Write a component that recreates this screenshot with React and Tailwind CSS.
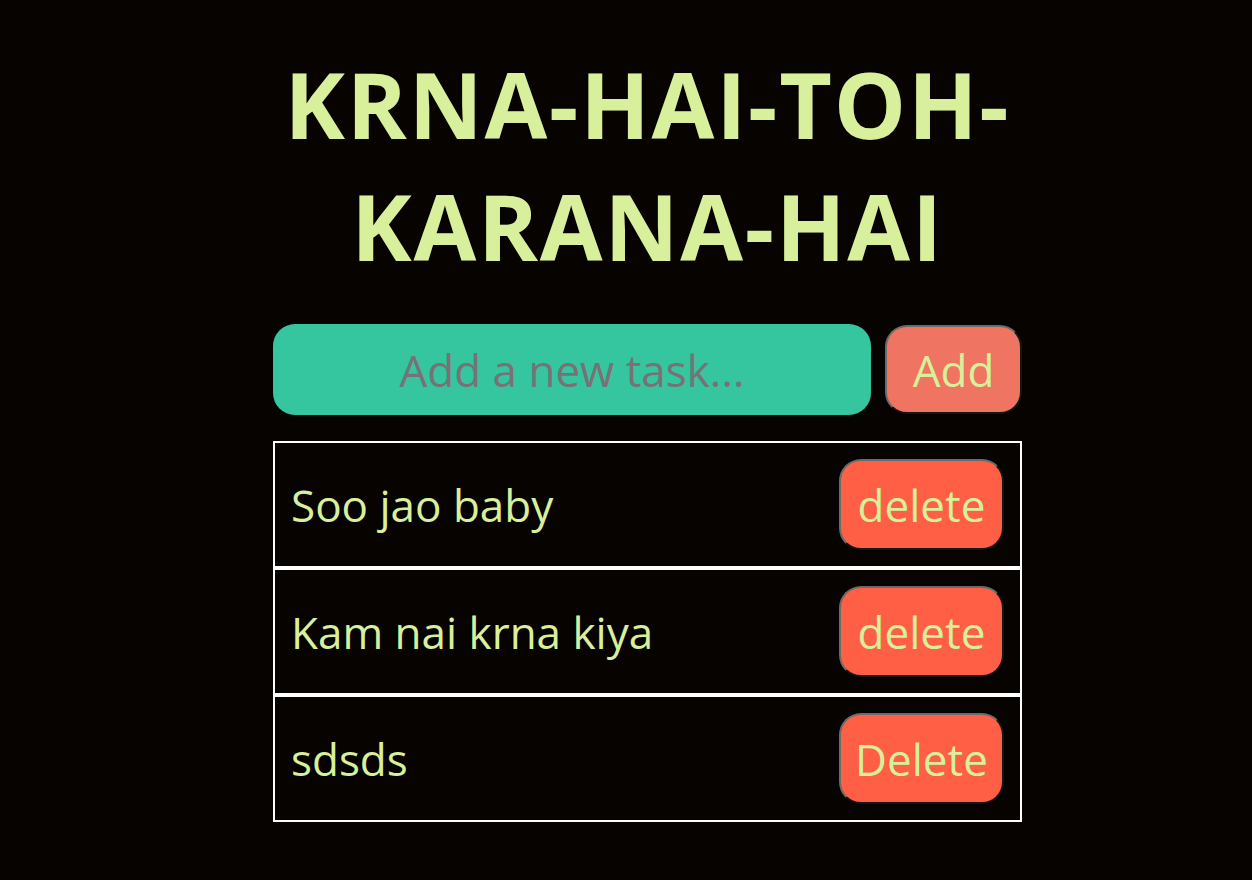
import React, { useState } from 'react'

function App() {
  const [task, setTask] = useState('')
  const [todos, setTodos] = useState([
    { id: 1, text: 'Soo jao baby', label: 'delete' },
    { id: 2, text: 'Kam nai krna kiya', label: 'delete' },
    { id: 3, text: 'sdsds', label: 'Delete' }
  ])

  const addTodo = () => {
    if (!task.trim()) return
    setTodos([...todos, { id: Date.now(), text: task, label: 'Delete' }])
    setTask('')
  }

  const removeTodo = (id) => {
    setTodos(todos.filter((t) => t.id !== id))
  }

  return (
    <div className="min-h-screen bg-[#070300] text-[#d8f09c] font-['Open_Sans',sans-serif] overflow-hidden">
      <div className="w-[749px] ml-[273px] pt-[43px]">
        {/* Title */}
        <h1 className="text-center font-bold text-[91px] leading-[122px] tracking-[1.8px] mb-[37px]">
          KRNA-HAI-TOH-KARANA-HAI
        </h1>

        {/* Input row */}
        <div className="flex items-center gap-[14px]">
          <input
            type="text"
            value={task}
            onChange={(e) => setTask(e.target.value)}
            placeholder="Add a new task..."
            className="w-[598px] h-[91px] rounded-[22px] bg-[#35c59f] text-center text-[44px] text-[#d8f09c] placeholder:text-[#787276] outline-none"
          />
          <button
            onClick={addTodo}
            className="w-[137px] h-[89px] rounded-[22px] bg-[#ef7461] text-[44px] text-[#d8f09c] border-2 border-[#6b6b6b] [border-style:outset]"
          >
            Add
          </button>
        </div>

        {/* List */}
        <ul className="mt-[26px]">
          {todos.map((todo) => (
            <li
              key={todo.id}
              className="h-[127px] border-2 border-white pl-4 pr-4 flex items-center justify-between"
            >
              <span className="text-[44px]">{todo.text}</span>
              <button
                onClick={() => removeTodo(todo.id)}
                className="w-[165px] h-[91px] rounded-[22px] bg-[#ff5f45] text-[44px] text-[#d8f09c] border-2 border-[#6b6b6b] [border-style:outset]"
              >
                {todo.label}
              </button>
            </li>
          ))}
        </ul>
      </div>
    </div>
  )
}

export default App
